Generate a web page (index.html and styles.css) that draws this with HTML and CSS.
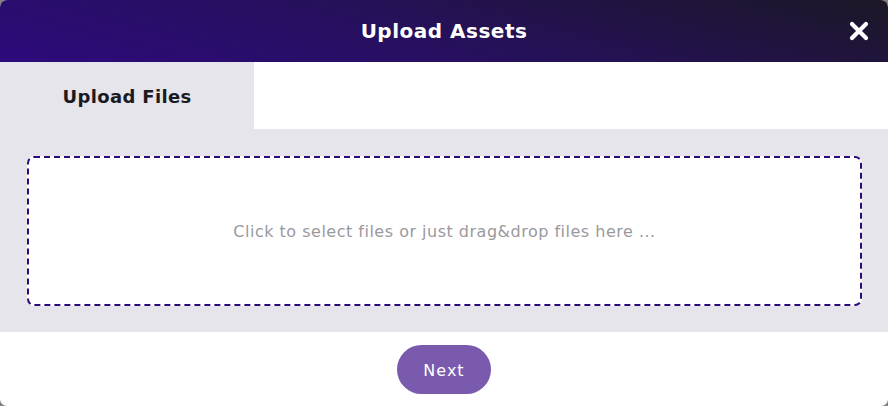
FILE: index.html
```html
<!DOCTYPE html>
<html>
<head>
<meta charset="utf-8">
<link rel="stylesheet" href="styles.css">
</head>
<body>
<div class="modal">
  <header class="modal-header">
    <h1 class="title">Upload Assets</h1>
    <button class="close" aria-label="Close">
      <svg width="20" height="20" viewBox="0 0 20 20"><path d="M3 3 L17 17 M17 3 L3 17" stroke="#fff" stroke-width="4.2" stroke-linecap="round"/></svg>
    </button>
  </header>
  <nav class="tabs">
    <div class="tab active">Upload Files</div>
  </nav>
  <section class="panel">
    <div class="dropzone">Click to select files or just drag&amp;drop files here ...</div>
  </section>
  <footer class="footer">
    <button class="next">Next</button>
  </footer>
</div>
</body>
</html>
```
FILE: styles.css
```css
* { box-sizing: border-box; }
html, body { margin: 0; padding: 0; }
body {
  background: #808080;
  font-family: "DejaVu Sans", "Open Sans", sans-serif;
  width: 888px;
  height: 406px;
  overflow: hidden;
}
.modal {
  width: 888px;
  height: 406px;
  border-radius: 7px;
  overflow: hidden;
  background: #fff;
  display: flex;
  flex-direction: column;
}
.modal-header {
  height: 62px;
  background: linear-gradient(15deg, #2d0a7c 0%, #26105e 45%, #1c1726 100%);
  display: flex;
  align-items: center;
  justify-content: center;
  position: relative;
}
.title {
  margin: 0;
  color: #fff;
  font-size: 20px;
  font-weight: 700;
  letter-spacing: 0.5px;
}
.close {
  position: absolute;
  right: 19px;
  top: 21px;
  width: 20px;
  height: 20px;
  padding: 0;
  border: 0;
  background: none;
  display: flex;
}
.tabs {
  height: 67px;
  display: flex;
  background: #fff;
}
.tab {
  width: 254px;
  background: #e6e5eb;
  display: flex;
  align-items: center;
  justify-content: center;
  font-size: 18px;
  font-weight: 700;
  color: #1b1a22;
  letter-spacing: 0.35px;
  padding-top: 2px;
}
.panel {
  background: #e6e5eb;
  padding: 27px 26px 26px 27px;
}
.dropzone {
  height: 150px;
  background: #fff;
  border: 2px dashed #2d0a7c;
  border-radius: 7px;
  display: flex;
  align-items: center;
  justify-content: center;
  color: #9a999e;
  font-size: 16px;
  letter-spacing: 0.5px;
}
.footer {
  flex: 1;
  display: flex;
  justify-content: center;
  padding-top: 13px;
}
.next {
  width: 94px;
  height: 49px;
  border: 0;
  border-radius: 25px;
  background: #7a5aad;
  color: #fff;
  font-family: inherit;
  font-size: 16px;
  letter-spacing: 1px;
  padding-top: 2px;
}
```
